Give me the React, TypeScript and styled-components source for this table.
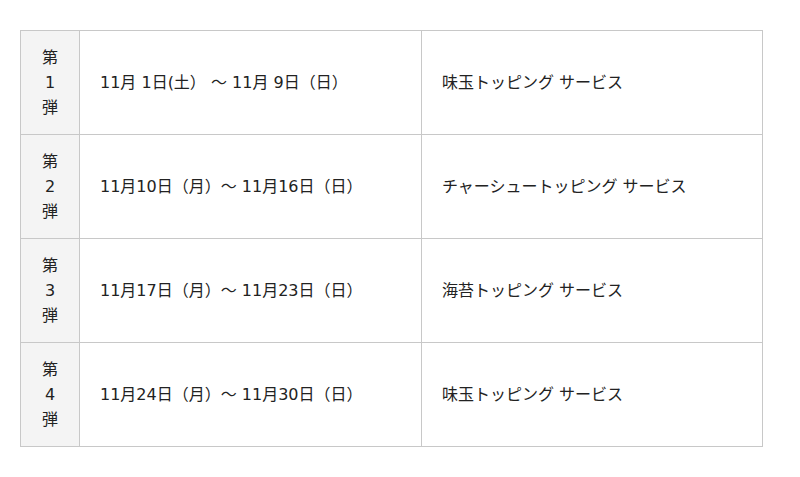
import React from "react";
import styled, { createGlobalStyle } from "styled-components";

const Global = createGlobalStyle`
  html, body { margin: 0; padding: 0; background: #fff; }
  body { font-family: "DejaVu Sans", "Noto Sans CJK JP", sans-serif; color: #222; }
`;

const Wrap = styled.div`
  padding: 30px 38px 30px 20px;
`;

const Table = styled.table`
  border-collapse: collapse;
  width: 742px;
  table-layout: fixed;
  font-size: 16px;
  line-height: 25px;
  border: 1px solid #dcdcdc;
`;

const Row = styled.tr`
  height: 104px;
`;

const Head = styled.th`
  background: #f4f4f4;
  border: 1px solid #c8c8c8;
  font-weight: normal;
  text-align: center;
  vertical-align: middle;
  padding: 0;
`;

const Cell = styled.td`
  border: 1px solid #c8c8c8;
  padding: 0 20px;
  vertical-align: middle;
  white-space: nowrap;
`;

const rows = [
  { n: "1", date: "11月 1日(土） ～ 11月 9日（日）", svc: "味玉トッピング サービス" },
  { n: "2", date: "11月10日（月）～ 11月16日（日）", svc: "チャーシュートッピング サービス" },
  { n: "3", date: "11月17日（月）～ 11月23日（日）", svc: "海苔トッピング サービス" },
  { n: "4", date: "11月24日（月）～ 11月30日（日）", svc: "味玉トッピング サービス" },
];

export default function App() {
  return (
    <Wrap>
      <Global />
      <Table>
        <colgroup>
          <col style={{ width: 59 }} />
          <col style={{ width: 342 }} />
          <col style={{ width: 341 }} />
        </colgroup>
        <tbody>
          {rows.map((r) => (
            <Row key={r.n}>
              <Head>
                第<br />
                {r.n}
                <br />弾
              </Head>
              <Cell>{r.date}</Cell>
              <Cell>{r.svc}</Cell>
            </Row>
          ))}
        </tbody>
      </Table>
    </Wrap>
  );
}
